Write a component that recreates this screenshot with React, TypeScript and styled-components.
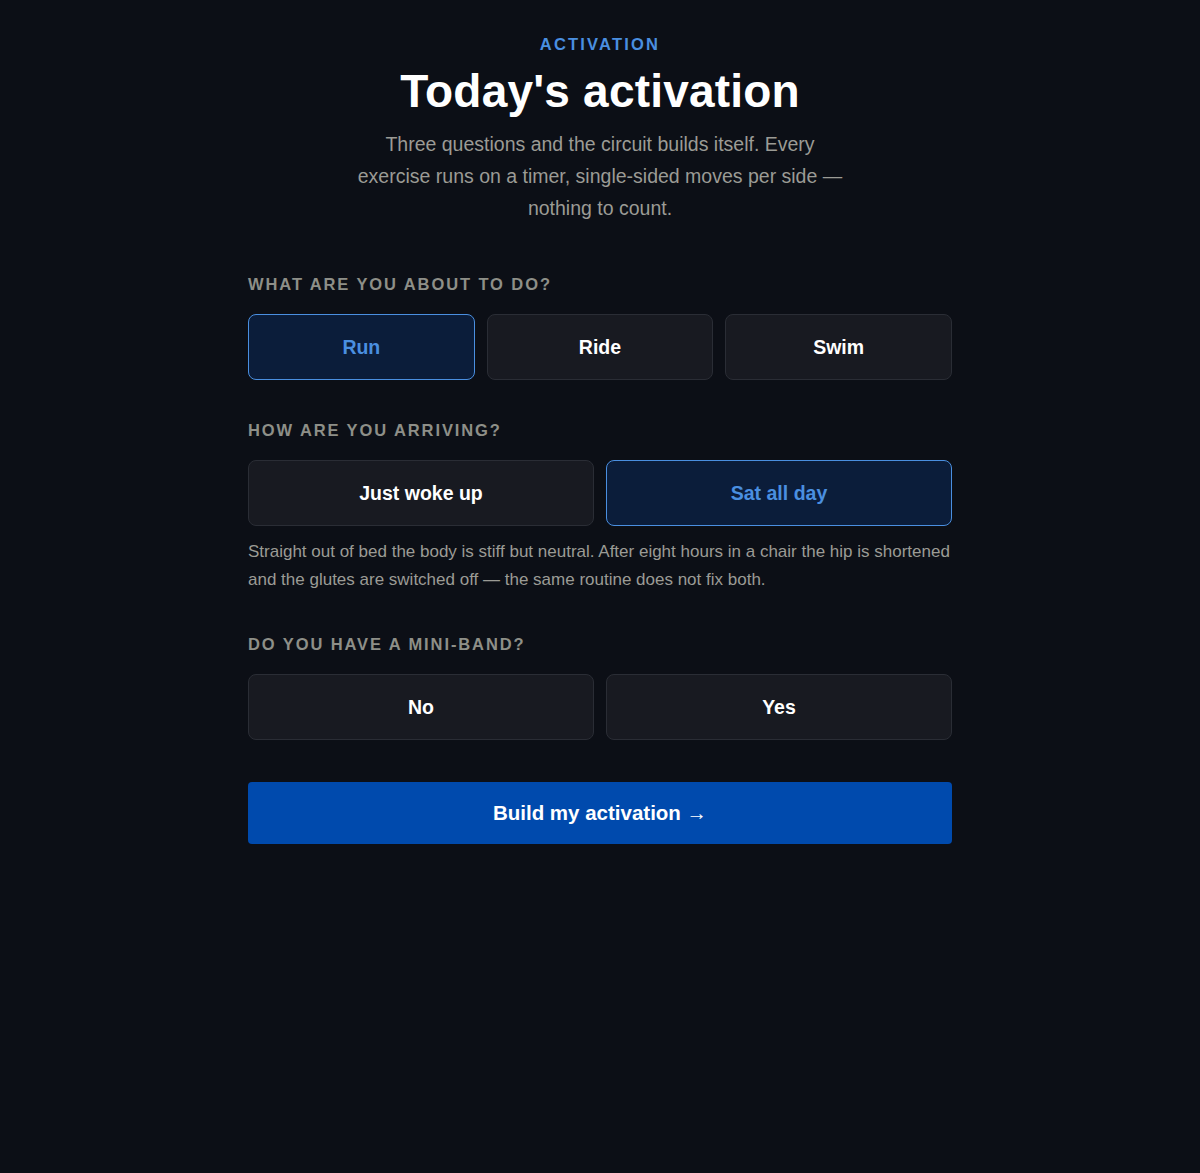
import React, { useState } from "react";
import styled, { createGlobalStyle } from "styled-components";

const GlobalStyle = createGlobalStyle`
  html, body {
    margin: 0;
    padding: 0;
    background: #0c0f16;
  }
  body {
    font-family: "Liberation Sans", Arial, sans-serif;
    -webkit-font-smoothing: antialiased;
  }
  #root {
    min-height: 1173px;
  }
`;

type Option = { id: string; label: string };

const sportOptions: Option[] = [
  { id: "run", label: "Run" },
  { id: "ride", label: "Ride" },
  { id: "swim", label: "Swim" },
];

const arrivalOptions: Option[] = [
  { id: "woke", label: "Just woke up" },
  { id: "sat", label: "Sat all day" },
];

const bandOptions: Option[] = [
  { id: "no", label: "No" },
  { id: "yes", label: "Yes" },
];

const App: React.FC = () => {
  const [sport, setSport] = useState("run");
  const [arrival, setArrival] = useState("sat");
  const [band, setBand] = useState("");

  return (
    <Page>
      <GlobalStyle />
      <Main>
        <Header>
          <Eyebrow>Activation</Eyebrow>
          <Title>Today's activation</Title>
          <Lead>
            Three questions and the circuit builds itself. Every exercise runs
            on a timer, single-sided moves per side — nothing to count.
          </Lead>
        </Header>

        <Question>
          <QuestionLabel>What are you about to do?</QuestionLabel>
          <Choices $cols={3}>
            {sportOptions.map((o) => (
              <Choice
                key={o.id}
                $active={sport === o.id}
                onClick={() => setSport(o.id)}
              >
                {o.label}
              </Choice>
            ))}
          </Choices>
        </Question>

        <Question>
          <QuestionLabel>How are you arriving?</QuestionLabel>
          <Choices $cols={2}>
            {arrivalOptions.map((o) => (
              <Choice
                key={o.id}
                $active={arrival === o.id}
                onClick={() => setArrival(o.id)}
              >
                {o.label}
              </Choice>
            ))}
          </Choices>
          <Hint>
            Straight out of bed the body is stiff but neutral. After eight hours
            in a chair the hip is shortened and the glutes are switched off — the
            same routine does not fix both.
          </Hint>
        </Question>

        <Question>
          <QuestionLabel>Do you have a mini-band?</QuestionLabel>
          <Choices $cols={2}>
            {bandOptions.map((o) => (
              <Choice
                key={o.id}
                $active={band === o.id}
                onClick={() => setBand(o.id)}
              >
                {o.label}
              </Choice>
            ))}
          </Choices>
        </Question>

        <BuildButton>Build my activation →</BuildButton>
      </Main>
    </Page>
  );
};

export default App;

const Page = styled.div`
  background: #0c0f16;
  min-height: 1173px;
  display: flex;
  justify-content: center;
`;

const Main = styled.main`
  width: 704px;
  padding-top: 34px;
  display: flex;
  flex-direction: column;
`;

const Header = styled.header`
  display: flex;
  flex-direction: column;
  align-items: center;
  text-align: center;
  margin-bottom: 49px;
`;

const Eyebrow = styled.div`
  color: #4a8fe0;
  font-size: 16.5px;
  font-weight: 700;
  letter-spacing: 2.2px;
  text-transform: uppercase;
  line-height: 20px;
`;

const Title = styled.h1`
  margin: 10px 0 0;
  color: #ffffff;
  font-size: 46px;
  font-weight: 700;
  line-height: 54px;
  letter-spacing: 0.2px;
`;

const Lead = styled.p`
  margin: 10px 0 0;
  max-width: 498px;
  color: #9b9b95;
  font-size: 19.5px;
  line-height: 32px;
`;

const Question = styled.section`
  display: flex;
  flex-direction: column;
  margin-bottom: 39px;
`;

const QuestionLabel = styled.h2`
  margin: 0 0 19px;
  color: #8e8f88;
  font-size: 16.5px;
  font-weight: 700;
  letter-spacing: 1.9px;
  line-height: 22px;
  text-transform: uppercase;
`;

const Choices = styled.div<{ $cols: number }>`
  display: grid;
  grid-template-columns: repeat(${(p) => p.$cols}, 1fr);
  gap: 12px;
`;

const Choice = styled.button<{ $active: boolean }>`
  height: 66px;
  border-radius: 8px;
  border: 1px solid ${(p) => (p.$active ? "#4a8fe0" : "#2a2d35")};
  background: ${(p) => (p.$active ? "#0b1d3a" : "#181a21")};
  color: ${(p) => (p.$active ? "#4a8fe0" : "#ffffff")};
  font-family: inherit;
  font-size: 19.5px;
  font-weight: 700;
  cursor: pointer;
`;

const Hint = styled.p`
  margin: 12px 0 0;
  color: #9b9b95;
  font-size: 17px;
  line-height: 28px;
`;

const BuildButton = styled.button`
  margin-top: 3px;
  height: 62px;
  border: none;
  border-radius: 4px;
  background: #004aad;
  color: #ffffff;
  font-family: inherit;
  font-size: 20.5px;
  font-weight: 700;
  cursor: pointer;
`;
